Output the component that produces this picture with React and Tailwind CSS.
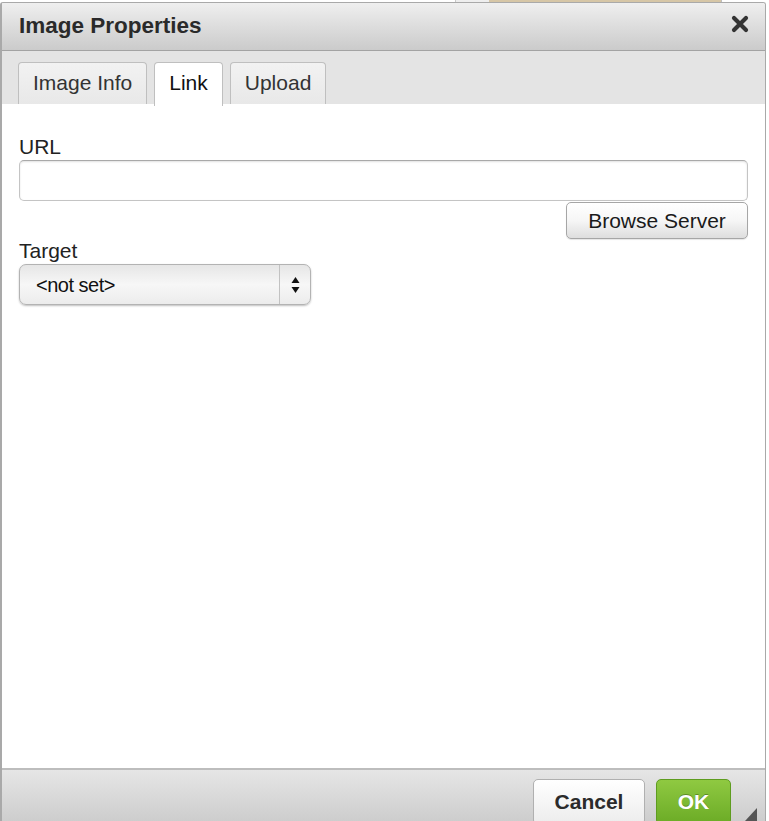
import { useState } from "react";

function Tab({ label, active, onClick }) {
    return (
        <button
            onClick={onClick}
            className={`h-[43px] px-[14px] pt-[8px] flex items-start border border-b-0 border-[#bfbfbf] rounded-t-[4px] text-[21px] leading-[24px] self-start ${
                active
                    ? "bg-white text-[#111] h-[44px] relative z-10"
                    : "bg-gradient-to-b from-[#f2f2f2] to-[#e8e8e8] text-[#333]"
            }`}
        >
            {label}
        </button>
    );
}

function App() {
    const [tab, setTab] = useState("Link");
    const tabs = ["Image Info", "Link", "Upload"];

    return (
        <div
            className="w-[769px] h-[821px] bg-white flex flex-col overflow-hidden text-[#222]"
            style={{ fontFamily: '"Liberation Sans", Arial, sans-serif' }}
        >
            {/* page behind the dialog */}
            <div className="h-[2px] flex shrink-0">
                <div className="w-[455px] bg-white" />
                <div className="w-[1px] bg-[#c8c8c8]" />
                <div className="w-[33px] bg-[#eeeeee]" />
                <div className="w-[232px] bg-[#d6c6a6]" />
                <div className="w-[1px] bg-[#bdbdbd]" />
                <div className="flex-1 bg-white" />
            </div>

            <div className="w-[766px] flex-1 flex flex-col border-l-2 border-t border-r border-[#a9a9a9] rounded-tl-[3px] rounded-tr-[3px] overflow-hidden">
                {/* title bar */}
                <div className="h-[48px] shrink-0 flex items-start justify-between pl-[17px] pr-[16px] pt-[10px] border-b border-[#a3a3a3] bg-gradient-to-b from-[#efefef] to-[#cbcbcb]">
                    <h1 className="text-[22.5px] leading-[26px] font-bold text-[#2a2a2a]">Image Properties</h1>
                    <button className="mt-[2px]" aria-label="Close">
                        <svg width="18" height="18" viewBox="0 0 18 18">
                            <path d="M3 3 L15 15 M15 3 L3 15" stroke="#333" strokeWidth="4.2" strokeLinecap="round" />
                        </svg>
                    </button>
                </div>

                {/* tabs */}
                <div className="h-[54px] shrink-0 flex gap-[7px] items-end pl-[16px] pt-[11px] bg-[#e4e4e4] border-b border-[#b5b5b5]">
                    {tabs.map((t) => (
                        <Tab key={t} label={t} active={tab === t} onClick={() => setTab(t)} />
                    ))}
                </div>

                {/* body */}
                <div className="flex-1 bg-white pl-[17px] pr-[17px] pt-[31px] -mt-px">
                    <label htmlFor="url" className="block text-[21px] leading-[24px]">URL</label>
                    <input
                        id="url"
                        type="text"
                        className="block mt-[1px] w-full h-[41px] px-2 text-[20px] bg-white border border-[#c4c4c4] border-t-[#a9a9a9] rounded-[5px] shadow-[inset_0_1px_2px_rgba(0,0,0,0.12)] focus:outline-none"
                    />
                    <div className="flex justify-end mt-[1px]">
                        <button className="w-[182px] h-[37px] text-[21px] leading-[24px] text-[#1a1a1a] border border-[#a6a6a6] rounded-[5px] bg-gradient-to-b from-white via-[#f6f6f6] to-[#dedede] shadow-[0_1px_1px_rgba(0,0,0,0.1)]">
                            Browse Server
                        </button>
                    </div>
                    <label htmlFor="target" className="block text-[21px] leading-[24px]">Target</label>
                    <div className="mt-[1px] w-[292px] h-[41px] flex border border-[#b3b3b3] rounded-[7px] bg-gradient-to-b from-[#e6e6e6] via-[#f7f7f7] to-[#ececec] shadow-[0_1px_2px_rgba(0,0,0,0.25)]">
                        <div className="flex-1 flex items-center pl-[16px] text-[20px] tracking-[-0.5px] text-[#111]">&lt;not set&gt;</div>
                        <div className="w-[31px] border-l border-[#c2c2c2] flex items-center justify-center">
                            <svg width="9" height="18" viewBox="0 0 9 18">
                                <path d="M4.5 1 L8.5 7 L0.5 7 Z" fill="#111" />
                                <path d="M0.5 11 L8.5 11 L4.5 17 Z" fill="#111" />
                            </svg>
                        </div>
                    </div>
                </div>

                {/* footer */}
                <div className="h-[53px] shrink-0 flex items-start justify-end pt-[9px] pr-[8px] border-t-2 border-[#bdbdbd] bg-gradient-to-b from-[#e6e6e6] to-[#cdcdcd]">
                    <button className="w-[112px] h-[46px] pt-[10px] flex items-start justify-center text-[21px] leading-[24px] font-bold text-[#2b2b2b] border border-[#b0b0b0] rounded-[5px] bg-gradient-to-b from-white to-[#ececec]">
                        Cancel
                    </button>
                    <button className="ml-[11px] w-[75px] h-[46px] pt-[10px] flex items-start justify-center text-[21px] leading-[24px] font-bold text-white border border-[#5e9c1f] rounded-[5px] bg-gradient-to-b from-[#8fc941] to-[#6bab25] [text-shadow:0_-1px_0_rgba(0,0,0,0.3)]">
                        OK
                    </button>
                    <svg className="ml-[14px] self-end" width="12" height="13" viewBox="0 0 12 13">
                        <path d="M12 0 L12 13 L0 13 Z" fill="#555" />
                    </svg>
                </div>
            </div>
        </div>
    );
}

export default App;
